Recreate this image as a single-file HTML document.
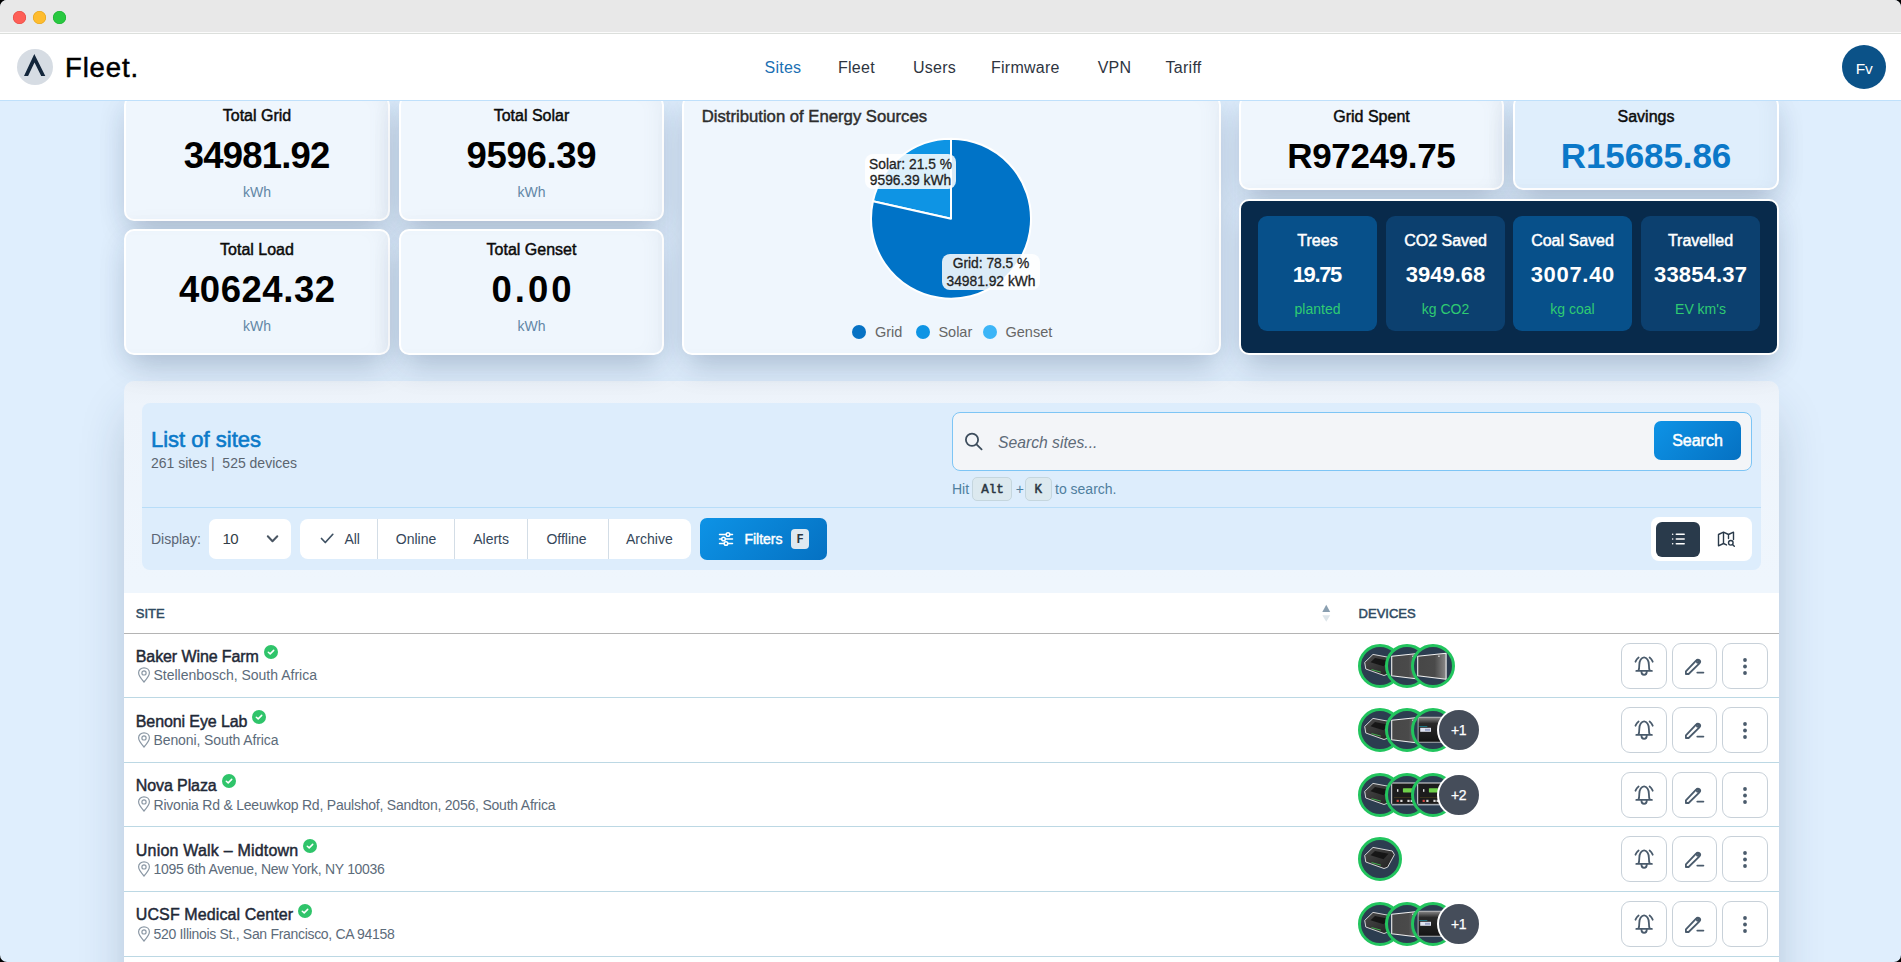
<!DOCTYPE html>
<html><head><meta charset="utf-8"><title>Fleet</title>
<style>
html,body{margin:0;padding:0;background:#000;overflow:hidden}
body{width:1901px;height:962px;font-family:"Liberation Sans",sans-serif}
.win{position:absolute;left:0;top:0;width:1901px;height:962px;border-radius:7px;overflow:hidden;background:#dfeefd}
.t{position:absolute;line-height:1;white-space:nowrap}
</style></head><body><div class="win">
<div style="position:absolute;left:124px;top:381px;width:1655px;height:700px;border-radius:10px;background:linear-gradient(180deg,#ebf1f8 0px,#eef4fb 24px,#eff6fd 200px);box-shadow:0 25px 50px -12px rgba(30,55,85,.32)"></div>
<div style="position:absolute;left:142px;top:403px;width:1619px;height:167px;border-radius:8px;background:#ddedfc"></div>
<div style="position:absolute;left:142px;top:507px;width:1619px;height:1px;background:#b8ddf8"></div>
<div class="t" style="top:428.68px;font-size:22px;font-weight:400;color:#0b7ac9;-webkit-text-stroke-width:0.6px;left:151.00px;">List of sites</div>
<div class="t" style="top:456.15px;font-size:14px;font-weight:400;color:#5b6570;left:151.00px;">261 sites |&nbsp; 525 devices</div>
<div style="position:absolute;left:952px;top:412px;width:800px;height:59px;box-sizing:border-box;border:1px solid #7dc5f5;border-radius:8px;background:#f3f5f8"></div>
<svg style="position:absolute;left:960px;top:428px" width="28" height="28"><circle cx="12" cy="11.8" r="6.1" fill="none" stroke="#3d4d5d" stroke-width="1.8"/><line x1="16.5" y1="16.4" x2="21.6" y2="21.3" stroke="#3d4d5d" stroke-width="1.8" stroke-linecap="round"/></svg>
<div class="t" style="top:434.51px;font-size:15.7px;font-weight:400;color:#5e6b78;font-style:italic;left:998.00px;">Search sites...</div>
<div style="position:absolute;left:1654px;top:421px;width:87px;height:39px;border-radius:7px;background:linear-gradient(135deg,#0e93e6,#0571c2)"></div>
<div class="t" style="top:433.46px;font-size:16px;font-weight:400;color:#fff;-webkit-text-stroke-width:0.5px;left:1397.50px;width:600px;text-align:center;">Search</div>
<div class="t" style="top:482.15px;font-size:14px;font-weight:400;color:#4f7f9e;left:952.00px;">Hit</div>
<div style="position:absolute;left:972.4px;top:477.3px;width:40px;height:24px;box-sizing:border-box;border:1px solid #c5d6de;border-radius:5px;background:#dce9ef"></div>
<div class="t" style="top:484.42px;font-size:12.5px;font-weight:400;color:#2a3642;-webkit-text-stroke-width:0.5px;font-family:'Liberation Mono',monospace;left:692.40px;width:600px;text-align:center;">Alt</div>
<div class="t" style="top:482.15px;font-size:14px;font-weight:400;color:#4f7f9e;left:1015.80px;">+</div>
<div style="position:absolute;left:1025px;top:477.3px;width:26.5px;height:24px;box-sizing:border-box;border:1px solid #c5d6de;border-radius:5px;background:#dce9ef"></div>
<div class="t" style="top:484.42px;font-size:12.5px;font-weight:400;color:#2a3642;-webkit-text-stroke-width:0.5px;font-family:'Liberation Mono',monospace;left:738.30px;width:600px;text-align:center;">K</div>
<div class="t" style="top:482.15px;font-size:14px;font-weight:400;color:#4f7f9e;left:1055.00px;">to search.</div>
<div class="t" style="top:532.15px;font-size:14px;font-weight:400;color:#5b6675;left:151.00px;">Display:</div>
<div style="position:absolute;left:209px;top:519px;width:82px;height:40px;border-radius:7px;background:#fff"></div>
<div class="t" style="top:531.30px;font-size:15px;font-weight:400;color:#333d47;letter-spacing:-0.6px;left:222.60px;">10</div>
<svg style="position:absolute;left:262px;top:530px" width="20" height="18"><polyline points="5.8,6.3 10.5,11.2 15.3,6.3" fill="none" stroke="#4a5663" stroke-width="2" stroke-linecap="round" stroke-linejoin="round"/></svg>
<div style="position:absolute;left:300px;top:519px;width:391px;height:40px;border-radius:8px;background:#fff"></div>
<div style="position:absolute;left:377px;top:519px;width:1px;height:40px;background:#d3dde6"></div>
<div style="position:absolute;left:454px;top:519px;width:1px;height:40px;background:#d3dde6"></div>
<div style="position:absolute;left:527px;top:519px;width:1px;height:40px;background:#d3dde6"></div>
<div style="position:absolute;left:608px;top:519px;width:1px;height:40px;background:#d3dde6"></div>
<svg style="position:absolute;left:316px;top:528px" width="22" height="22"><polyline points="5.5,10.5 9.3,14.5 16.8,6.3" fill="none" stroke="#3f5163" stroke-width="1.7" stroke-linecap="round" stroke-linejoin="round"/></svg>
<div class="t" style="top:532.15px;font-size:14px;font-weight:400;color:#35475a;left:344.40px;">All</div>
<div class="t" style="top:532.15px;font-size:14px;font-weight:400;color:#35475a;left:395.80px;">Online</div>
<div class="t" style="top:532.15px;font-size:14px;font-weight:400;color:#35475a;left:473.20px;">Alerts</div>
<div class="t" style="top:532.15px;font-size:14px;font-weight:400;color:#35475a;left:546.40px;">Offline</div>
<div class="t" style="top:532.15px;font-size:14px;font-weight:400;color:#35475a;left:626.00px;">Archive</div>
<div style="position:absolute;left:700px;top:518px;width:127px;height:42px;border-radius:7px;background:linear-gradient(135deg,#0d93e6,#0571c2)"></div>
<svg style="position:absolute;left:716px;top:529px" width="20" height="20" fill="none" stroke="#fff" stroke-width="1.5" stroke-linecap="round"><line x1="3.5" y1="5.5" x2="16.5" y2="5.5"/><line x1="3.5" y1="10" x2="16.5" y2="10"/><line x1="3.5" y1="14.5" x2="16.5" y2="14.5"/><circle cx="12" cy="5.5" r="1.8" fill="#0b86d8"/><circle cx="7.5" cy="10" r="1.8" fill="#0b86d8"/><circle cx="10" cy="14.5" r="1.8" fill="#0b86d8"/></svg>
<div class="t" style="top:532.15px;font-size:14px;font-weight:400;color:#fff;-webkit-text-stroke-width:0.45px;left:744.40px;">Filters</div>
<div style="position:absolute;left:791px;top:529px;width:18px;height:19.5px;border-radius:4px;background:#dfe9f0"></div>
<div class="t" style="top:534.00px;font-size:12px;font-weight:700;color:#2a3642;font-family:'Liberation Mono',monospace;left:500.00px;width:600px;text-align:center;">F</div>
<div style="position:absolute;left:1651px;top:517px;width:101px;height:44px;border-radius:8px;background:#fff"></div>
<div style="position:absolute;left:1656px;top:522px;width:44px;height:35px;border-radius:6px;background:#293a4b"></div>
<svg style="position:absolute;left:1668px;top:529px" width="20" height="20" stroke="#fff" stroke-width="1.5" stroke-linecap="round"><line x1="8.3" y1="5.3" x2="16.2" y2="5.3"/><line x1="8.3" y1="10" x2="16.2" y2="10"/><line x1="8.3" y1="14.7" x2="16.2" y2="14.7"/><line x1="4.6" y1="5.3" x2="4.7" y2="5.3"/><line x1="4.6" y1="10" x2="4.7" y2="10"/><line x1="4.6" y1="14.7" x2="4.7" y2="14.7"/></svg>
<svg style="position:absolute;left:1715px;top:528px" width="24" height="22" fill="none" stroke="#2a3a4a" stroke-width="1.4" stroke-linejoin="round" stroke-linecap="round"><path d="M3.5,6.5 L8.5,4.2 L13.5,6.5 L18.5,4.2 L18.5,11.5 M3.5,6.5 L3.5,17.8 L8.5,15.5 L11.5,16.9 M8.5,4.2 L8.5,15.5 M13.5,6.5 L13.5,10.5"/><circle cx="15.8" cy="14.8" r="2.3"/><line x1="17.5" y1="16.5" x2="19.3" y2="18.3"/></svg>
<div style="position:absolute;left:124px;top:95px;width:266px;height:126px;box-sizing:border-box;border:2px solid #fff;border-radius:10px;background:#eff6fd;box-shadow:0 16px 30px -6px rgba(30,55,85,.22), 0 4px 30px rgba(30,55,85,.08), inset -14px 0 18px -10px rgba(120,130,160,.07)"></div>
<div class="t" style="top:107.66px;font-size:16px;font-weight:400;color:#0b0b0b;-webkit-text-stroke-width:0.45px;left:-43.00px;width:600px;text-align:center;">Total Grid</div>
<div class="t" style="top:137.50px;font-size:36.5px;font-weight:700;color:#000;letter-spacing:-0.8px;left:-43.40px;width:600px;text-align:center;">34981.92</div>
<div class="t" style="top:185.05px;font-size:14px;font-weight:400;color:#6287a6;left:-43.00px;width:600px;text-align:center;">kWh</div>
<div style="position:absolute;left:399px;top:95px;width:265px;height:126px;box-sizing:border-box;border:2px solid #fff;border-radius:10px;background:#eff6fd;box-shadow:0 16px 30px -6px rgba(30,55,85,.22), 0 4px 30px rgba(30,55,85,.08), inset -14px 0 18px -10px rgba(120,130,160,.07)"></div>
<div class="t" style="top:107.66px;font-size:16px;font-weight:400;color:#0b0b0b;-webkit-text-stroke-width:0.45px;left:231.50px;width:600px;text-align:center;">Total Solar</div>
<div class="t" style="top:137.50px;font-size:36.5px;font-weight:700;color:#000;letter-spacing:-0.3px;left:231.35px;width:600px;text-align:center;">9596.39</div>
<div class="t" style="top:185.05px;font-size:14px;font-weight:400;color:#6287a6;left:231.50px;width:600px;text-align:center;">kWh</div>
<div style="position:absolute;left:124px;top:229px;width:266px;height:126px;box-sizing:border-box;border:2px solid #fff;border-radius:10px;background:#eff6fd;box-shadow:0 16px 30px -6px rgba(30,55,85,.22), 0 4px 30px rgba(30,55,85,.08), inset -14px 0 18px -10px rgba(120,130,160,.07)"></div>
<div class="t" style="top:241.66px;font-size:16px;font-weight:400;color:#0b0b0b;-webkit-text-stroke-width:0.45px;left:-43.00px;width:600px;text-align:center;">Total Load</div>
<div class="t" style="top:271.50px;font-size:36.5px;font-weight:700;color:#000;letter-spacing:0.57px;left:-42.71px;width:600px;text-align:center;">40624.32</div>
<div class="t" style="top:319.05px;font-size:14px;font-weight:400;color:#6287a6;left:-43.00px;width:600px;text-align:center;">kWh</div>
<div style="position:absolute;left:399px;top:229px;width:265px;height:126px;box-sizing:border-box;border:2px solid #fff;border-radius:10px;background:#eff6fd;box-shadow:0 16px 30px -6px rgba(30,55,85,.22), 0 4px 30px rgba(30,55,85,.08), inset -14px 0 18px -10px rgba(120,130,160,.07)"></div>
<div class="t" style="top:241.66px;font-size:16px;font-weight:400;color:#0b0b0b;-webkit-text-stroke-width:0.45px;left:231.50px;width:600px;text-align:center;">Total Genset</div>
<div class="t" style="top:271.50px;font-size:36.5px;font-weight:700;color:#000;letter-spacing:3px;left:233.00px;width:600px;text-align:center;">0.00</div>
<div class="t" style="top:319.05px;font-size:14px;font-weight:400;color:#6287a6;left:231.50px;width:600px;text-align:center;">kWh</div>
<div style="position:absolute;left:682px;top:95px;width:539px;height:260px;box-sizing:border-box;border:2px solid #fff;border-radius:10px;background:#eff6fd;box-shadow:0 16px 30px -6px rgba(30,55,85,.22), 0 4px 30px rgba(30,55,85,.08), inset -14px 0 18px -10px rgba(120,130,160,.07)"></div>
<div class="t" style="top:109.16px;font-size:16.7px;font-weight:400;color:#2d2d2d;-webkit-text-stroke-width:0.45px;left:701.70px;">Distribution of Energy Sources</div>
<div style="position:absolute;left:1239px;top:95px;width:265px;height:95px;box-sizing:border-box;border:2px solid #fff;border-radius:10px;background:#eff6fd;box-shadow:0 16px 30px -6px rgba(30,55,85,.22), 0 4px 30px rgba(30,55,85,.08), inset -14px 0 18px -10px rgba(120,130,160,.07)"></div>
<div style="position:absolute;left:1513px;top:95px;width:266px;height:95px;box-sizing:border-box;border:2px solid #fff;border-radius:10px;background:#dfeefc;box-shadow:0 16px 30px -6px rgba(30,55,85,.22), 0 4px 30px rgba(30,55,85,.08), inset -14px 0 18px -10px rgba(120,130,160,.07)"></div>
<div class="t" style="top:108.66px;font-size:16px;font-weight:400;color:#0b0b0b;-webkit-text-stroke-width:0.45px;left:1071.50px;width:600px;text-align:center;">Grid Spent</div>
<div class="t" style="top:137.97px;font-size:35px;font-weight:700;color:#000;letter-spacing:-0.35px;left:1071.33px;width:600px;text-align:center;">R97249.75</div>
<div class="t" style="top:108.66px;font-size:16px;font-weight:400;color:#0b0b0b;-webkit-text-stroke-width:0.45px;left:1346.00px;width:600px;text-align:center;">Savings</div>
<div class="t" style="top:137.97px;font-size:35px;font-weight:700;color:#0b78c8;letter-spacing:-0.1px;left:1345.95px;width:600px;text-align:center;">R15685.86</div>
<div style="position:absolute;left:1239px;top:199px;width:540px;height:156px;box-sizing:border-box;border:2px solid #fff;border-radius:10px;background:#082a4b;box-shadow:0 16px 30px -6px rgba(30,55,85,.22), 0 4px 30px rgba(30,55,85,.08)"></div>
<div style="position:absolute;left:1258px;top:216px;width:119px;height:115px;border-radius:9px;background:#07508a"></div>
<div class="t" style="top:232.66px;font-size:16px;font-weight:400;color:#fff;-webkit-text-stroke-width:0.5px;left:1017.50px;width:600px;text-align:center;">Trees</div>
<div class="t" style="top:264.48px;font-size:22px;font-weight:700;color:#fff;letter-spacing:-1.4px;left:1016.80px;width:600px;text-align:center;">19.75</div>
<div class="t" style="top:301.85px;font-size:14px;font-weight:400;color:#2fcb72;left:1017.50px;width:600px;text-align:center;">planted</div>
<div style="position:absolute;left:1386px;top:216px;width:119px;height:115px;border-radius:9px;background:#0c406f"></div>
<div class="t" style="top:232.66px;font-size:16px;font-weight:400;color:#fff;-webkit-text-stroke-width:0.5px;left:1145.50px;width:600px;text-align:center;">CO2 Saved</div>
<div class="t" style="top:264.48px;font-size:22px;font-weight:700;color:#fff;left:1145.50px;width:600px;text-align:center;">3949.68</div>
<div class="t" style="top:301.85px;font-size:14px;font-weight:400;color:#2fcb72;left:1145.50px;width:600px;text-align:center;">kg CO2</div>
<div style="position:absolute;left:1513px;top:216px;width:119px;height:115px;border-radius:9px;background:#07508a"></div>
<div class="t" style="top:232.66px;font-size:16px;font-weight:400;color:#fff;-webkit-text-stroke-width:0.5px;left:1272.50px;width:600px;text-align:center;">Coal Saved</div>
<div class="t" style="top:264.48px;font-size:22px;font-weight:700;color:#fff;letter-spacing:0.7px;left:1272.85px;width:600px;text-align:center;">3007.40</div>
<div class="t" style="top:301.85px;font-size:14px;font-weight:400;color:#2fcb72;left:1272.50px;width:600px;text-align:center;">kg coal</div>
<div style="position:absolute;left:1641px;top:216px;width:119px;height:115px;border-radius:9px;background:#0c406f"></div>
<div class="t" style="top:232.66px;font-size:16px;font-weight:400;color:#fff;-webkit-text-stroke-width:0.5px;left:1400.50px;width:600px;text-align:center;">Travelled</div>
<div class="t" style="top:264.48px;font-size:22px;font-weight:700;color:#fff;letter-spacing:0.15px;left:1400.58px;width:600px;text-align:center;">33854.37</div>
<div class="t" style="top:301.85px;font-size:14px;font-weight:400;color:#2fcb72;left:1400.50px;width:600px;text-align:center;">EV km's</div>
<svg style="position:absolute;left:0;top:0;overflow:visible" width="1901" height="400">
<path d="M951,218.7 L951,138.7 A80,80 0 0 0 872.93,201.25 Z" fill="#0e94e4" stroke="#fff" stroke-width="2" stroke-linejoin="round"/>
<path d="M951,218.7 L872.93,201.25 A80,80 0 1 0 951,138.7 Z" fill="#0073c7" stroke="#fff" stroke-width="2" stroke-linejoin="round"/>
</svg>
<div style="position:absolute;left:865px;top:154.3px;width:91px;height:34.7px;border-radius:8px;background:rgba(255,255,255,.86)"></div>
<div class="t" style="top:157.92px;font-size:13.8px;font-weight:400;color:#1f1f1f;-webkit-text-stroke-width:0.3px;left:610.50px;width:600px;text-align:center;">Solar: 21.5 %</div>
<div class="t" style="top:174.32px;font-size:13.8px;font-weight:400;color:#1f1f1f;-webkit-text-stroke-width:0.3px;left:610.50px;width:600px;text-align:center;">9596.39 kWh</div>
<div style="position:absolute;left:942px;top:254px;width:98px;height:36.3px;border-radius:8px;background:rgba(255,255,255,.86)"></div>
<div class="t" style="top:256.92px;font-size:13.8px;font-weight:400;color:#1f1f1f;-webkit-text-stroke-width:0.3px;left:691.00px;width:600px;text-align:center;">Grid: 78.5 %</div>
<div class="t" style="top:274.82px;font-size:13.8px;font-weight:400;color:#1f1f1f;-webkit-text-stroke-width:0.3px;left:691.00px;width:600px;text-align:center;">34981.92 kWh</div>
<div style="position:absolute;left:852.4px;top:325.3px;width:14px;height:14px;border-radius:50%;background:#0672c4"></div>
<div class="t" style="top:325.23px;font-size:14.5px;font-weight:400;color:#666;left:875.00px;">Grid</div>
<div style="position:absolute;left:916px;top:325.3px;width:14px;height:14px;border-radius:50%;background:#0e94e4"></div>
<div class="t" style="top:325.23px;font-size:14.5px;font-weight:400;color:#666;left:938.40px;">Solar</div>
<div style="position:absolute;left:982.6px;top:325.3px;width:14px;height:14px;border-radius:50%;background:#3cb5f7"></div>
<div class="t" style="top:325.23px;font-size:14.5px;font-weight:400;color:#666;left:1005.50px;">Genset</div>
<div style="position:absolute;left:124px;top:593px;width:1655px;height:400px;background:#fff"></div>
<div class="t" style="top:606.80px;font-size:13px;font-weight:400;color:#2e4a62;-webkit-text-stroke-width:0.5px;left:135.80px;">SITE</div>
<div class="t" style="top:606.90px;font-size:13px;font-weight:400;color:#2e4a62;-webkit-text-stroke-width:0.5px;left:1358.60px;">DEVICES</div>
<svg style="position:absolute;left:1318px;top:602px" width="16" height="22"><polygon points="4.3,10 12.2,10 8.25,2.8" fill="#8a9fb0"/><polygon points="4.3,13.2 12.2,13.2 8.25,19.8" fill="#dde5ea"/></svg>
<div style="position:absolute;left:124px;top:633px;width:1655px;height:1px;background:#b4b4b4"></div>
<div class="t" style="top:649.06px;font-size:16px;font-weight:400;color:#1f2937;-webkit-text-stroke-width:0.45px;letter-spacing:-0.1px;left:135.80px;height:15px">Baker Wine Farm<span style="display:inline-block;vertical-align:top;margin-left:5px;margin-top:-3.8px"><svg width="14" height="14" viewBox="0 0 14 14"><circle cx="7" cy="7" r="7" fill="#2fc46a"/><polyline points="4.3,7.2 6.2,8.9 9.7,5.4" fill="none" stroke="#fff" stroke-width="1.5" stroke-linecap="round" stroke-linejoin="round"/></svg></span></div>
<div style="position:absolute;left:137px;top:667.2px;width:14px;height:16px"><svg width="14" height="16" viewBox="0 0 14 16" fill="none" stroke="#8b98a5" stroke-width="1.2"><path d="M7,15 C3.2,10.8 1.6,8.2 1.6,5.8 C1.6,2.9 4,0.8 7,0.8 C10,0.8 12.4,2.9 12.4,5.8 C12.4,8.2 10.8,10.8 7,15 Z"/><circle cx="7" cy="5.9" r="2.1"/></svg></div>
<div class="t" style="top:668.45px;font-size:14px;font-weight:400;color:#5c6b7a;left:153.50px;">Stellenbosch, South Africa</div>
<div style="position:absolute;left:1358.0px;top:643.6px;width:44px;height:44px;box-sizing:border-box;border:3px solid #22c55e;border-radius:50%;background:#2c3d50;overflow:hidden"><svg width="38" height="38" style="position:absolute;left:0;top:0"><defs><linearGradient id="rg" x1="0" y1="0" x2="1" y2="1"><stop offset="0" stop-color="#4a4a4a"/><stop offset="1" stop-color="#202020"/></linearGradient></defs><path d="M3.7,15.4 L12,7.4 L31.3,11 L33.4,14.7 L26.6,27.2 L23,28.5 L4.8,22 Z" fill="url(#rg)" stroke="#e6e6e6" stroke-width="0.9" stroke-linejoin="round"/><path d="M9.5,15.2 L14,11 L27.5,13.8 L22.5,19.2 Z" fill="#0e0e0e" opacity=".8"/><path d="M10.5,22.6 L19.8,25.1" stroke="#3fae4c" stroke-width="1"/></svg></div>
<div style="position:absolute;left:1384.7px;top:643.6px;width:44px;height:44px;box-sizing:border-box;border:3px solid #22c55e;border-radius:50%;background:#2c3d50;overflow:hidden"><svg width="38" height="38" style="position:absolute;left:0;top:0"><defs><linearGradient id="pg" x1="0" y1="0" x2="1" y2="0"><stop offset="0" stop-color="#474747"/><stop offset=".6" stop-color="#4a4a4a"/><stop offset="1" stop-color="#8a8a8a"/></linearGradient></defs><path d="M3.7,9.2 L32.1,6.2 L32.1,32.2 L3.7,28.7 Z" fill="url(#pg)" stroke="#f0f0f0" stroke-width="1.1" stroke-linejoin="round"/><rect x="24" y="8.5" width="1.8" height="1.5" fill="#bbb"/></svg></div>
<div style="position:absolute;left:1411.4px;top:643.6px;width:44px;height:44px;box-sizing:border-box;border:3px solid #22c55e;border-radius:50%;background:#2c3d50;overflow:hidden"><svg width="38" height="38" style="position:absolute;left:0;top:0"><defs><linearGradient id="pg" x1="0" y1="0" x2="1" y2="0"><stop offset="0" stop-color="#474747"/><stop offset=".6" stop-color="#4a4a4a"/><stop offset="1" stop-color="#8a8a8a"/></linearGradient></defs><path d="M3.7,9.2 L32.1,6.2 L32.1,32.2 L3.7,28.7 Z" fill="url(#pg)" stroke="#f0f0f0" stroke-width="1.1" stroke-linejoin="round"/><rect x="24" y="8.5" width="1.8" height="1.5" fill="#bbb"/></svg></div>
<div style="position:absolute;left:1621.2px;top:643.2px;width:45.5px;height:45.5px;box-sizing:border-box;border:1px solid #c8d1d9;border-radius:9px;background:#fff"><div style="position:absolute;left:9.9px;top:9.9px;width:24px;height:24px"><svg width="24" height="24" viewBox="0 0 24 24" fill="none" stroke="#4a5b6c" stroke-width="1.8" stroke-linecap="round" stroke-linejoin="round"><path d="M4.3,16.9 H19.9 M6.4,16.9 C7,15.4 7.3,13.6 7.3,10.9 C7.3,6.6 9.5,3.4 12.1,3.4 C14.7,3.4 16.9,6.6 16.9,10.9 C16.9,13.6 17.2,15.4 17.8,16.9"/><path d="M9.4,17.2 C9.4,19.5 10.6,20.8 12.1,20.8 C13.6,20.8 14.8,19.5 14.8,17.2"/><path d="M3.5,7.7 C4.2,6 5.2,4.5 6.6,3.5"/><path d="M20.7,7.7 C20,6 19,4.5 17.6,3.5"/></svg></div></div>
<div style="position:absolute;left:1671.6px;top:643.2px;width:45.5px;height:45.5px;box-sizing:border-box;border:1px solid #c8d1d9;border-radius:9px;background:#fff"><div style="position:absolute;left:9.9px;top:9.9px;width:24px;height:24px"><svg width="24" height="24" viewBox="0 0 24 24" fill="none" stroke="#4a5b6c" stroke-width="1.8" stroke-linecap="round" stroke-linejoin="round"><path d="M3.9,20 L3.9,17.3 L14.3,6.3 C15.1,5.4 16.5,5.3 17.4,6.2 C18.3,7.1 18.3,8.5 17.4,9.4 L6.6,20 Z"/><circle cx="15.9" cy="7.7" r="1.1"/><line x1="15.3" y1="18.6" x2="21.4" y2="18.6"/></svg></div></div>
<div style="position:absolute;left:1722.0px;top:643.2px;width:45.5px;height:45.5px;box-sizing:border-box;border:1px solid #c8d1d9;border-radius:9px;background:#fff"><div style="position:absolute;left:9.9px;top:9.9px;width:24px;height:24px"><svg width="24" height="24" viewBox="0 0 24 24" fill="#4a5b6c"><circle cx="12" cy="6" r="1.9"/><circle cx="12" cy="12.5" r="1.9"/><circle cx="12" cy="19" r="1.9"/></svg></div></div>
<div style="position:absolute;left:124px;top:697px;width:1655px;height:1px;background:#bcd8e4"></div>
<div class="t" style="top:713.66px;font-size:16px;font-weight:400;color:#1f2937;-webkit-text-stroke-width:0.45px;letter-spacing:-0.1px;left:135.80px;height:15px">Benoni Eye Lab<span style="display:inline-block;vertical-align:top;margin-left:5px;margin-top:-3.8px"><svg width="14" height="14" viewBox="0 0 14 14"><circle cx="7" cy="7" r="7" fill="#2fc46a"/><polyline points="4.3,7.2 6.2,8.9 9.7,5.4" fill="none" stroke="#fff" stroke-width="1.5" stroke-linecap="round" stroke-linejoin="round"/></svg></span></div>
<div style="position:absolute;left:137px;top:731.8px;width:14px;height:16px"><svg width="14" height="16" viewBox="0 0 14 16" fill="none" stroke="#8b98a5" stroke-width="1.2"><path d="M7,15 C3.2,10.8 1.6,8.2 1.6,5.8 C1.6,2.9 4,0.8 7,0.8 C10,0.8 12.4,2.9 12.4,5.8 C12.4,8.2 10.8,10.8 7,15 Z"/><circle cx="7" cy="5.9" r="2.1"/></svg></div>
<div class="t" style="top:733.05px;font-size:14px;font-weight:400;color:#5c6b7a;letter-spacing:-0.1px;left:153.50px;">Benoni, South Africa</div>
<div style="position:absolute;left:1358.0px;top:707.6px;width:44px;height:44px;box-sizing:border-box;border:3px solid #22c55e;border-radius:50%;background:#2c3d50;overflow:hidden"><svg width="38" height="38" style="position:absolute;left:0;top:0"><defs><linearGradient id="rg" x1="0" y1="0" x2="1" y2="1"><stop offset="0" stop-color="#4a4a4a"/><stop offset="1" stop-color="#202020"/></linearGradient></defs><path d="M3.7,15.4 L12,7.4 L31.3,11 L33.4,14.7 L26.6,27.2 L23,28.5 L4.8,22 Z" fill="url(#rg)" stroke="#e6e6e6" stroke-width="0.9" stroke-linejoin="round"/><path d="M9.5,15.2 L14,11 L27.5,13.8 L22.5,19.2 Z" fill="#0e0e0e" opacity=".8"/><path d="M10.5,22.6 L19.8,25.1" stroke="#3fae4c" stroke-width="1"/></svg></div>
<div style="position:absolute;left:1384.7px;top:707.6px;width:44px;height:44px;box-sizing:border-box;border:3px solid #22c55e;border-radius:50%;background:#2c3d50;overflow:hidden"><svg width="38" height="38" style="position:absolute;left:0;top:0"><defs><linearGradient id="pg" x1="0" y1="0" x2="1" y2="0"><stop offset="0" stop-color="#474747"/><stop offset=".6" stop-color="#4a4a4a"/><stop offset="1" stop-color="#8a8a8a"/></linearGradient></defs><path d="M3.7,9.2 L32.1,6.2 L32.1,32.2 L3.7,28.7 Z" fill="url(#pg)" stroke="#f0f0f0" stroke-width="1.1" stroke-linejoin="round"/><rect x="24" y="8.5" width="1.8" height="1.5" fill="#bbb"/></svg></div>
<div style="position:absolute;left:1411.4px;top:707.6px;width:44px;height:44px;box-sizing:border-box;border:3px solid #22c55e;border-radius:50%;background:#2c3d50;overflow:hidden"><svg width="38" height="38" style="position:absolute;left:0;top:0"><defs><linearGradient id="ig" x1="0" y1="0" x2="0" y2="1"><stop offset="0" stop-color="#8a8a8a"/><stop offset=".25" stop-color="#2a2a2a"/><stop offset="1" stop-color="#141414"/></linearGradient></defs><rect x="4.1" y="6.2" width="30" height="25" fill="url(#ig)" stroke="#cfcfcf" stroke-width="0.8"/><rect x="5.3" y="15" width="8" height="0.9" fill="#1f7f8f"/><rect x="6.2" y="16.8" width="10.8" height="4" fill="#dfe3f0"/><rect x="11" y="17.8" width="5" height="2" fill="#9aa3c8"/></svg></div>
<div style="position:absolute;left:1436.8px;top:708.1px;width:44px;height:44px;box-sizing:border-box;border:2px solid #fff;border-radius:50%;background:#454d5a"></div>
<div class="t" style="top:723.25px;font-size:14px;font-weight:400;color:#fff;-webkit-text-stroke-width:0.25px;letter-spacing:-0.6px;left:1158.50px;width:600px;text-align:center;">+1</div>
<div style="position:absolute;left:1621.2px;top:707.2px;width:45.5px;height:45.5px;box-sizing:border-box;border:1px solid #c8d1d9;border-radius:9px;background:#fff"><div style="position:absolute;left:9.9px;top:9.9px;width:24px;height:24px"><svg width="24" height="24" viewBox="0 0 24 24" fill="none" stroke="#4a5b6c" stroke-width="1.8" stroke-linecap="round" stroke-linejoin="round"><path d="M4.3,16.9 H19.9 M6.4,16.9 C7,15.4 7.3,13.6 7.3,10.9 C7.3,6.6 9.5,3.4 12.1,3.4 C14.7,3.4 16.9,6.6 16.9,10.9 C16.9,13.6 17.2,15.4 17.8,16.9"/><path d="M9.4,17.2 C9.4,19.5 10.6,20.8 12.1,20.8 C13.6,20.8 14.8,19.5 14.8,17.2"/><path d="M3.5,7.7 C4.2,6 5.2,4.5 6.6,3.5"/><path d="M20.7,7.7 C20,6 19,4.5 17.6,3.5"/></svg></div></div>
<div style="position:absolute;left:1671.6px;top:707.2px;width:45.5px;height:45.5px;box-sizing:border-box;border:1px solid #c8d1d9;border-radius:9px;background:#fff"><div style="position:absolute;left:9.9px;top:9.9px;width:24px;height:24px"><svg width="24" height="24" viewBox="0 0 24 24" fill="none" stroke="#4a5b6c" stroke-width="1.8" stroke-linecap="round" stroke-linejoin="round"><path d="M3.9,20 L3.9,17.3 L14.3,6.3 C15.1,5.4 16.5,5.3 17.4,6.2 C18.3,7.1 18.3,8.5 17.4,9.4 L6.6,20 Z"/><circle cx="15.9" cy="7.7" r="1.1"/><line x1="15.3" y1="18.6" x2="21.4" y2="18.6"/></svg></div></div>
<div style="position:absolute;left:1722.0px;top:707.2px;width:45.5px;height:45.5px;box-sizing:border-box;border:1px solid #c8d1d9;border-radius:9px;background:#fff"><div style="position:absolute;left:9.9px;top:9.9px;width:24px;height:24px"><svg width="24" height="24" viewBox="0 0 24 24" fill="#4a5b6c"><circle cx="12" cy="6" r="1.9"/><circle cx="12" cy="12.5" r="1.9"/><circle cx="12" cy="19" r="1.9"/></svg></div></div>
<div style="position:absolute;left:124px;top:762px;width:1655px;height:1px;background:#bcd8e4"></div>
<div class="t" style="top:778.26px;font-size:16px;font-weight:400;color:#1f2937;-webkit-text-stroke-width:0.45px;letter-spacing:-0.1px;left:135.80px;height:15px">Nova Plaza<span style="display:inline-block;vertical-align:top;margin-left:5px;margin-top:-3.8px"><svg width="14" height="14" viewBox="0 0 14 14"><circle cx="7" cy="7" r="7" fill="#2fc46a"/><polyline points="4.3,7.2 6.2,8.9 9.7,5.4" fill="none" stroke="#fff" stroke-width="1.5" stroke-linecap="round" stroke-linejoin="round"/></svg></span></div>
<div style="position:absolute;left:137px;top:796.4px;width:14px;height:16px"><svg width="14" height="16" viewBox="0 0 14 16" fill="none" stroke="#8b98a5" stroke-width="1.2"><path d="M7,15 C3.2,10.8 1.6,8.2 1.6,5.8 C1.6,2.9 4,0.8 7,0.8 C10,0.8 12.4,2.9 12.4,5.8 C12.4,8.2 10.8,10.8 7,15 Z"/><circle cx="7" cy="5.9" r="2.1"/></svg></div>
<div class="t" style="top:797.65px;font-size:14px;font-weight:400;color:#5c6b7a;letter-spacing:-0.22px;left:153.50px;">Rivonia Rd &amp; Leeuwkop Rd, Paulshof, Sandton, 2056, South Africa</div>
<div style="position:absolute;left:1358.0px;top:772.6px;width:44px;height:44px;box-sizing:border-box;border:3px solid #22c55e;border-radius:50%;background:#2c3d50;overflow:hidden"><svg width="38" height="38" style="position:absolute;left:0;top:0"><defs><linearGradient id="rg" x1="0" y1="0" x2="1" y2="1"><stop offset="0" stop-color="#4a4a4a"/><stop offset="1" stop-color="#202020"/></linearGradient></defs><path d="M3.7,15.4 L12,7.4 L31.3,11 L33.4,14.7 L26.6,27.2 L23,28.5 L4.8,22 Z" fill="url(#rg)" stroke="#e6e6e6" stroke-width="0.9" stroke-linejoin="round"/><path d="M9.5,15.2 L14,11 L27.5,13.8 L22.5,19.2 Z" fill="#0e0e0e" opacity=".8"/><path d="M10.5,22.6 L19.8,25.1" stroke="#3fae4c" stroke-width="1"/></svg></div>
<div style="position:absolute;left:1384.7px;top:772.6px;width:44px;height:44px;box-sizing:border-box;border:3px solid #22c55e;border-radius:50%;background:#2c3d50;overflow:hidden"><svg width="38" height="38" style="position:absolute;left:0;top:0"><rect x="3.7" y="7" width="29" height="21.4" rx="0.8" fill="#1c1c1c" stroke="#e2e2e2" stroke-width="1"/><rect x="3.7" y="28.4" width="29" height="1.1" fill="#8a96a3"/><rect x="14.9" y="12.2" width="14" height="4.2" rx="0.6" fill="#6fd24a"/><rect x="9" y="13.2" width="1.4" height="2.6" fill="#e0e0e0"/><rect x="6" y="21.5" width="24" height="0.5" fill="#5a4a20"/><rect x="8.6" y="23.8" width="2.2" height="2.2" fill="#d84a45"/><rect x="12.3" y="23.8" width="2.2" height="2.2" fill="#d8d8d8"/><rect x="19.4" y="23.8" width="2.2" height="2.2" fill="#d8d8d8"/><rect x="22.6" y="23.8" width="2.2" height="2.2" fill="#d8d8d8"/></svg></div>
<div style="position:absolute;left:1411.4px;top:772.6px;width:44px;height:44px;box-sizing:border-box;border:3px solid #22c55e;border-radius:50%;background:#2c3d50;overflow:hidden"><svg width="38" height="38" style="position:absolute;left:0;top:0"><rect x="3.7" y="7" width="29" height="21.4" rx="0.8" fill="#1c1c1c" stroke="#e2e2e2" stroke-width="1"/><rect x="3.7" y="28.4" width="29" height="1.1" fill="#8a96a3"/><rect x="14.9" y="12.2" width="14" height="4.2" rx="0.6" fill="#6fd24a"/><rect x="9" y="13.2" width="1.4" height="2.6" fill="#e0e0e0"/><rect x="6" y="21.5" width="24" height="0.5" fill="#5a4a20"/><rect x="8.6" y="23.8" width="2.2" height="2.2" fill="#d84a45"/><rect x="12.3" y="23.8" width="2.2" height="2.2" fill="#d8d8d8"/><rect x="19.4" y="23.8" width="2.2" height="2.2" fill="#d8d8d8"/><rect x="22.6" y="23.8" width="2.2" height="2.2" fill="#d8d8d8"/></svg></div>
<div style="position:absolute;left:1436.8px;top:773.1px;width:44px;height:44px;box-sizing:border-box;border:2px solid #fff;border-radius:50%;background:#454d5a"></div>
<div class="t" style="top:788.25px;font-size:14px;font-weight:400;color:#fff;-webkit-text-stroke-width:0.25px;letter-spacing:-0.6px;left:1158.50px;width:600px;text-align:center;">+2</div>
<div style="position:absolute;left:1621.2px;top:772.2px;width:45.5px;height:45.5px;box-sizing:border-box;border:1px solid #c8d1d9;border-radius:9px;background:#fff"><div style="position:absolute;left:9.9px;top:9.9px;width:24px;height:24px"><svg width="24" height="24" viewBox="0 0 24 24" fill="none" stroke="#4a5b6c" stroke-width="1.8" stroke-linecap="round" stroke-linejoin="round"><path d="M4.3,16.9 H19.9 M6.4,16.9 C7,15.4 7.3,13.6 7.3,10.9 C7.3,6.6 9.5,3.4 12.1,3.4 C14.7,3.4 16.9,6.6 16.9,10.9 C16.9,13.6 17.2,15.4 17.8,16.9"/><path d="M9.4,17.2 C9.4,19.5 10.6,20.8 12.1,20.8 C13.6,20.8 14.8,19.5 14.8,17.2"/><path d="M3.5,7.7 C4.2,6 5.2,4.5 6.6,3.5"/><path d="M20.7,7.7 C20,6 19,4.5 17.6,3.5"/></svg></div></div>
<div style="position:absolute;left:1671.6px;top:772.2px;width:45.5px;height:45.5px;box-sizing:border-box;border:1px solid #c8d1d9;border-radius:9px;background:#fff"><div style="position:absolute;left:9.9px;top:9.9px;width:24px;height:24px"><svg width="24" height="24" viewBox="0 0 24 24" fill="none" stroke="#4a5b6c" stroke-width="1.8" stroke-linecap="round" stroke-linejoin="round"><path d="M3.9,20 L3.9,17.3 L14.3,6.3 C15.1,5.4 16.5,5.3 17.4,6.2 C18.3,7.1 18.3,8.5 17.4,9.4 L6.6,20 Z"/><circle cx="15.9" cy="7.7" r="1.1"/><line x1="15.3" y1="18.6" x2="21.4" y2="18.6"/></svg></div></div>
<div style="position:absolute;left:1722.0px;top:772.2px;width:45.5px;height:45.5px;box-sizing:border-box;border:1px solid #c8d1d9;border-radius:9px;background:#fff"><div style="position:absolute;left:9.9px;top:9.9px;width:24px;height:24px"><svg width="24" height="24" viewBox="0 0 24 24" fill="#4a5b6c"><circle cx="12" cy="6" r="1.9"/><circle cx="12" cy="12.5" r="1.9"/><circle cx="12" cy="19" r="1.9"/></svg></div></div>
<div style="position:absolute;left:124px;top:826px;width:1655px;height:1px;background:#bcd8e4"></div>
<div class="t" style="top:842.86px;font-size:16px;font-weight:400;color:#1f2937;-webkit-text-stroke-width:0.45px;letter-spacing:0.2px;left:135.80px;height:15px">Union Walk &ndash; Midtown<span style="display:inline-block;vertical-align:top;margin-left:5px;margin-top:-3.8px"><svg width="14" height="14" viewBox="0 0 14 14"><circle cx="7" cy="7" r="7" fill="#2fc46a"/><polyline points="4.3,7.2 6.2,8.9 9.7,5.4" fill="none" stroke="#fff" stroke-width="1.5" stroke-linecap="round" stroke-linejoin="round"/></svg></span></div>
<div style="position:absolute;left:137px;top:861.0px;width:14px;height:16px"><svg width="14" height="16" viewBox="0 0 14 16" fill="none" stroke="#8b98a5" stroke-width="1.2"><path d="M7,15 C3.2,10.8 1.6,8.2 1.6,5.8 C1.6,2.9 4,0.8 7,0.8 C10,0.8 12.4,2.9 12.4,5.8 C12.4,8.2 10.8,10.8 7,15 Z"/><circle cx="7" cy="5.9" r="2.1"/></svg></div>
<div class="t" style="top:862.25px;font-size:14px;font-weight:400;color:#5c6b7a;letter-spacing:-0.3px;left:153.50px;">1095 6th Avenue, New York, NY 10036</div>
<div style="position:absolute;left:1358.0px;top:836.6px;width:44px;height:44px;box-sizing:border-box;border:3px solid #22c55e;border-radius:50%;background:#2c3d50;overflow:hidden"><svg width="38" height="38" style="position:absolute;left:0;top:0"><defs><linearGradient id="rg" x1="0" y1="0" x2="1" y2="1"><stop offset="0" stop-color="#4a4a4a"/><stop offset="1" stop-color="#202020"/></linearGradient></defs><path d="M3.7,15.4 L12,7.4 L31.3,11 L33.4,14.7 L26.6,27.2 L23,28.5 L4.8,22 Z" fill="url(#rg)" stroke="#e6e6e6" stroke-width="0.9" stroke-linejoin="round"/><path d="M9.5,15.2 L14,11 L27.5,13.8 L22.5,19.2 Z" fill="#0e0e0e" opacity=".8"/><path d="M10.5,22.6 L19.8,25.1" stroke="#3fae4c" stroke-width="1"/></svg></div>
<div style="position:absolute;left:1621.2px;top:836.2px;width:45.5px;height:45.5px;box-sizing:border-box;border:1px solid #c8d1d9;border-radius:9px;background:#fff"><div style="position:absolute;left:9.9px;top:9.9px;width:24px;height:24px"><svg width="24" height="24" viewBox="0 0 24 24" fill="none" stroke="#4a5b6c" stroke-width="1.8" stroke-linecap="round" stroke-linejoin="round"><path d="M4.3,16.9 H19.9 M6.4,16.9 C7,15.4 7.3,13.6 7.3,10.9 C7.3,6.6 9.5,3.4 12.1,3.4 C14.7,3.4 16.9,6.6 16.9,10.9 C16.9,13.6 17.2,15.4 17.8,16.9"/><path d="M9.4,17.2 C9.4,19.5 10.6,20.8 12.1,20.8 C13.6,20.8 14.8,19.5 14.8,17.2"/><path d="M3.5,7.7 C4.2,6 5.2,4.5 6.6,3.5"/><path d="M20.7,7.7 C20,6 19,4.5 17.6,3.5"/></svg></div></div>
<div style="position:absolute;left:1671.6px;top:836.2px;width:45.5px;height:45.5px;box-sizing:border-box;border:1px solid #c8d1d9;border-radius:9px;background:#fff"><div style="position:absolute;left:9.9px;top:9.9px;width:24px;height:24px"><svg width="24" height="24" viewBox="0 0 24 24" fill="none" stroke="#4a5b6c" stroke-width="1.8" stroke-linecap="round" stroke-linejoin="round"><path d="M3.9,20 L3.9,17.3 L14.3,6.3 C15.1,5.4 16.5,5.3 17.4,6.2 C18.3,7.1 18.3,8.5 17.4,9.4 L6.6,20 Z"/><circle cx="15.9" cy="7.7" r="1.1"/><line x1="15.3" y1="18.6" x2="21.4" y2="18.6"/></svg></div></div>
<div style="position:absolute;left:1722.0px;top:836.2px;width:45.5px;height:45.5px;box-sizing:border-box;border:1px solid #c8d1d9;border-radius:9px;background:#fff"><div style="position:absolute;left:9.9px;top:9.9px;width:24px;height:24px"><svg width="24" height="24" viewBox="0 0 24 24" fill="#4a5b6c"><circle cx="12" cy="6" r="1.9"/><circle cx="12" cy="12.5" r="1.9"/><circle cx="12" cy="19" r="1.9"/></svg></div></div>
<div style="position:absolute;left:124px;top:891px;width:1655px;height:1px;background:#bcd8e4"></div>
<div class="t" style="top:907.46px;font-size:16px;font-weight:400;color:#1f2937;-webkit-text-stroke-width:0.45px;letter-spacing:0.1px;left:135.80px;height:15px">UCSF Medical Center<span style="display:inline-block;vertical-align:top;margin-left:5px;margin-top:-3.8px"><svg width="14" height="14" viewBox="0 0 14 14"><circle cx="7" cy="7" r="7" fill="#2fc46a"/><polyline points="4.3,7.2 6.2,8.9 9.7,5.4" fill="none" stroke="#fff" stroke-width="1.5" stroke-linecap="round" stroke-linejoin="round"/></svg></span></div>
<div style="position:absolute;left:137px;top:925.6px;width:14px;height:16px"><svg width="14" height="16" viewBox="0 0 14 16" fill="none" stroke="#8b98a5" stroke-width="1.2"><path d="M7,15 C3.2,10.8 1.6,8.2 1.6,5.8 C1.6,2.9 4,0.8 7,0.8 C10,0.8 12.4,2.9 12.4,5.8 C12.4,8.2 10.8,10.8 7,15 Z"/><circle cx="7" cy="5.9" r="2.1"/></svg></div>
<div class="t" style="top:926.85px;font-size:14px;font-weight:400;color:#5c6b7a;letter-spacing:-0.31px;left:153.50px;">520 Illinois St., San Francisco, CA 94158</div>
<div style="position:absolute;left:1358.0px;top:901.6px;width:44px;height:44px;box-sizing:border-box;border:3px solid #22c55e;border-radius:50%;background:#2c3d50;overflow:hidden"><svg width="38" height="38" style="position:absolute;left:0;top:0"><defs><linearGradient id="rg" x1="0" y1="0" x2="1" y2="1"><stop offset="0" stop-color="#4a4a4a"/><stop offset="1" stop-color="#202020"/></linearGradient></defs><path d="M3.7,15.4 L12,7.4 L31.3,11 L33.4,14.7 L26.6,27.2 L23,28.5 L4.8,22 Z" fill="url(#rg)" stroke="#e6e6e6" stroke-width="0.9" stroke-linejoin="round"/><path d="M9.5,15.2 L14,11 L27.5,13.8 L22.5,19.2 Z" fill="#0e0e0e" opacity=".8"/><path d="M10.5,22.6 L19.8,25.1" stroke="#3fae4c" stroke-width="1"/></svg></div>
<div style="position:absolute;left:1384.7px;top:901.6px;width:44px;height:44px;box-sizing:border-box;border:3px solid #22c55e;border-radius:50%;background:#2c3d50;overflow:hidden"><svg width="38" height="38" style="position:absolute;left:0;top:0"><defs><linearGradient id="pg" x1="0" y1="0" x2="1" y2="0"><stop offset="0" stop-color="#474747"/><stop offset=".6" stop-color="#4a4a4a"/><stop offset="1" stop-color="#8a8a8a"/></linearGradient></defs><path d="M3.7,9.2 L32.1,6.2 L32.1,32.2 L3.7,28.7 Z" fill="url(#pg)" stroke="#f0f0f0" stroke-width="1.1" stroke-linejoin="round"/><rect x="24" y="8.5" width="1.8" height="1.5" fill="#bbb"/></svg></div>
<div style="position:absolute;left:1411.4px;top:901.6px;width:44px;height:44px;box-sizing:border-box;border:3px solid #22c55e;border-radius:50%;background:#2c3d50;overflow:hidden"><svg width="38" height="38" style="position:absolute;left:0;top:0"><defs><linearGradient id="ig" x1="0" y1="0" x2="0" y2="1"><stop offset="0" stop-color="#8a8a8a"/><stop offset=".25" stop-color="#2a2a2a"/><stop offset="1" stop-color="#141414"/></linearGradient></defs><rect x="4.1" y="6.2" width="30" height="25" fill="url(#ig)" stroke="#cfcfcf" stroke-width="0.8"/><rect x="5.3" y="15" width="8" height="0.9" fill="#1f7f8f"/><rect x="6.2" y="16.8" width="10.8" height="4" fill="#dfe3f0"/><rect x="11" y="17.8" width="5" height="2" fill="#9aa3c8"/></svg></div>
<div style="position:absolute;left:1436.8px;top:902.1px;width:44px;height:44px;box-sizing:border-box;border:2px solid #fff;border-radius:50%;background:#454d5a"></div>
<div class="t" style="top:917.25px;font-size:14px;font-weight:400;color:#fff;-webkit-text-stroke-width:0.25px;letter-spacing:-0.6px;left:1158.50px;width:600px;text-align:center;">+1</div>
<div style="position:absolute;left:1621.2px;top:901.2px;width:45.5px;height:45.5px;box-sizing:border-box;border:1px solid #c8d1d9;border-radius:9px;background:#fff"><div style="position:absolute;left:9.9px;top:9.9px;width:24px;height:24px"><svg width="24" height="24" viewBox="0 0 24 24" fill="none" stroke="#4a5b6c" stroke-width="1.8" stroke-linecap="round" stroke-linejoin="round"><path d="M4.3,16.9 H19.9 M6.4,16.9 C7,15.4 7.3,13.6 7.3,10.9 C7.3,6.6 9.5,3.4 12.1,3.4 C14.7,3.4 16.9,6.6 16.9,10.9 C16.9,13.6 17.2,15.4 17.8,16.9"/><path d="M9.4,17.2 C9.4,19.5 10.6,20.8 12.1,20.8 C13.6,20.8 14.8,19.5 14.8,17.2"/><path d="M3.5,7.7 C4.2,6 5.2,4.5 6.6,3.5"/><path d="M20.7,7.7 C20,6 19,4.5 17.6,3.5"/></svg></div></div>
<div style="position:absolute;left:1671.6px;top:901.2px;width:45.5px;height:45.5px;box-sizing:border-box;border:1px solid #c8d1d9;border-radius:9px;background:#fff"><div style="position:absolute;left:9.9px;top:9.9px;width:24px;height:24px"><svg width="24" height="24" viewBox="0 0 24 24" fill="none" stroke="#4a5b6c" stroke-width="1.8" stroke-linecap="round" stroke-linejoin="round"><path d="M3.9,20 L3.9,17.3 L14.3,6.3 C15.1,5.4 16.5,5.3 17.4,6.2 C18.3,7.1 18.3,8.5 17.4,9.4 L6.6,20 Z"/><circle cx="15.9" cy="7.7" r="1.1"/><line x1="15.3" y1="18.6" x2="21.4" y2="18.6"/></svg></div></div>
<div style="position:absolute;left:1722.0px;top:901.2px;width:45.5px;height:45.5px;box-sizing:border-box;border:1px solid #c8d1d9;border-radius:9px;background:#fff"><div style="position:absolute;left:9.9px;top:9.9px;width:24px;height:24px"><svg width="24" height="24" viewBox="0 0 24 24" fill="#4a5b6c"><circle cx="12" cy="6" r="1.9"/><circle cx="12" cy="12.5" r="1.9"/><circle cx="12" cy="19" r="1.9"/></svg></div></div>
<div style="position:absolute;left:124px;top:956px;width:1655px;height:1px;background:#bcd8e4"></div>
<div style="position:absolute;left:0px;top:0px;width:1901px;height:32px;background:#e8e8e8"></div>
<div style="position:absolute;left:0px;top:32px;width:1901px;height:1px;background:#fbfbfb"></div>
<div style="position:absolute;left:0px;top:33px;width:1901px;height:1px;background:#dcdfdc"></div>
<div style="position:absolute;left:13px;top:10.8px;width:13px;height:13px;border-radius:50%;background:#fe5f57;box-shadow:inset 0 0 0 0.6px #e2463f"></div>
<div style="position:absolute;left:33px;top:10.8px;width:13px;height:13px;border-radius:50%;background:#febc2e;box-shadow:inset 0 0 0 0.6px #e1a116"></div>
<div style="position:absolute;left:53px;top:10.8px;width:13px;height:13px;border-radius:50%;background:#28c840;box-shadow:inset 0 0 0 0.6px #14ae2b"></div>
<div style="position:absolute;left:0px;top:34px;width:1901px;height:66px;background:#fff;border-bottom:1px solid #bfe0fb;z-index:5"></div>
<div style="position:absolute;left:0;top:0;width:1901px;height:101px;z-index:6;pointer-events:none">
<div style="position:absolute;left:16.8px;top:48.8px;width:36px;height:36px;border-radius:50%;background:#d6dce3"></div>
<svg style="position:absolute;left:0;top:0" width="160" height="101"><polygon points="24,76 34.3,54 45.3,76 41.2,76 34.5,62.6 28.1,76" fill="#13263b"/></svg>
<div class="t" style="top:54.02px;font-size:27.5px;font-weight:400;color:#000;-webkit-text-stroke-width:0.5px;letter-spacing:0.85px;left:65.00px;">Fleet.</div>
<div class="t" style="top:60.46px;font-size:16px;font-weight:400;color:#1a70b3;letter-spacing:0.25px;left:764.50px;">Sites</div>
<div class="t" style="top:60.46px;font-size:16px;font-weight:400;color:#2e353f;letter-spacing:0.25px;left:838.00px;">Fleet</div>
<div class="t" style="top:60.46px;font-size:16px;font-weight:400;color:#2e353f;letter-spacing:0.25px;left:913.00px;">Users</div>
<div class="t" style="top:60.46px;font-size:16px;font-weight:400;color:#2e353f;letter-spacing:0.25px;left:991.00px;">Firmware</div>
<div class="t" style="top:60.46px;font-size:16px;font-weight:400;color:#2e353f;letter-spacing:0.25px;left:1097.70px;">VPN</div>
<div class="t" style="top:60.46px;font-size:16px;font-weight:400;color:#2e353f;letter-spacing:0.25px;left:1165.60px;">Tariff</div>
<div style="position:absolute;left:1842px;top:44.8px;width:44px;height:44px;border-radius:50%;background:#0b5288"></div>
<div class="t" style="top:60.78px;font-size:15.5px;font-weight:400;color:#fff;letter-spacing:-0.3px;left:1564.15px;width:600px;text-align:center;">Fv</div>
</div>
</div></body></html>
